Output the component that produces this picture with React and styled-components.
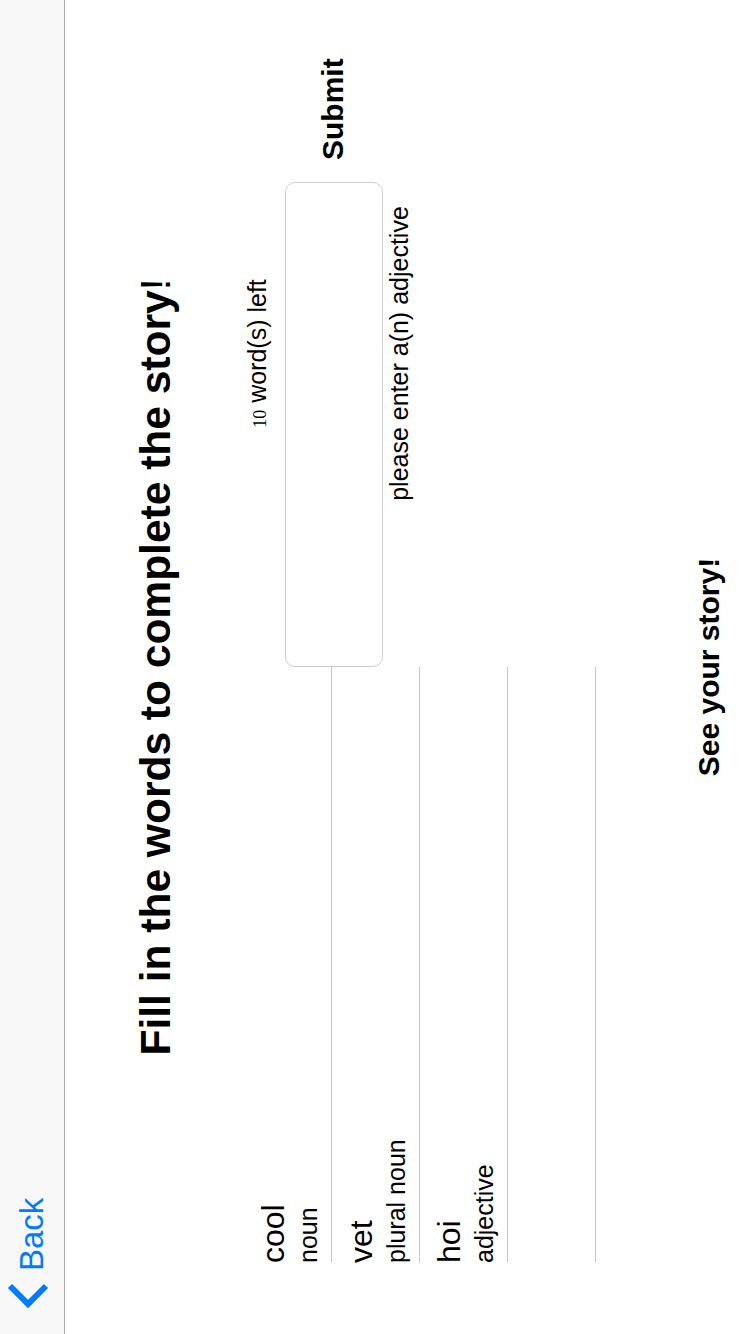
import React from "react";
import styled, { createGlobalStyle } from "styled-components";

const GlobalStyle = createGlobalStyle`
  html, body {
    margin: 0;
    padding: 0;
    overflow: hidden;
    background: #ffffff;
  }
  body {
    font-family: "Liberation Sans", Arial, sans-serif;
    color: #000;
  }
`;

const Viewport = styled.div`
  position: relative;
  width: 750px;
  height: 1334px;
  overflow: hidden;
  background: #fff;
`;

/* The app is shown in landscape; the screenshot is taken in portrait */
const Stage = styled.div`
  width: 1334px;
  height: 750px;
  transform-origin: 0 0;
  transform: translateY(1334px) rotate(-90deg);
  display: flex;
  flex-direction: column;
  background: #fff;
`;

const NavBar = styled.header`
  flex-shrink: 0;
  height: 64px;
  background: #f8f8f8;
  border-bottom: 1px solid #a9a9a9;
  display: flex;
  align-items: flex-start;
  padding-left: 24px;
`;

const BackButton = styled.button`
  display: flex;
  align-items: flex-start;
  background: none;
  border: 0;
  padding: 0;
  margin: 0;
  color: #007aff;
  font-family: inherit;
  font-size: 33px;
  line-height: 64px;
  cursor: pointer;
`;

const Chevron = styled.svg`
  margin-top: 6px;
  margin-right: 11px;
  flex-shrink: 0;
`;

const Title = styled.h1`
  margin: 0;
  flex-shrink: 0;
  height: 179px;
  box-sizing: border-box;
  padding-top: 66px;
  font-size: 42.5px;
  line-height: 50px;
  font-weight: 700;
  text-align: center;
`;

const Bang = styled.span`
  font-weight: 400;
`;

const Main = styled.main`
  display: flex;
  height: 450px;
  flex-shrink: 0;
`;

const Table = styled.ul`
  list-style: none;
  margin: 0;
  padding: 0;
  width: 667px;
  flex-shrink: 0;
`;

const Row = styled.li`
  margin-left: 71px;
  height: 88px;
  box-sizing: border-box;
  border-bottom: 1px solid #c8c7cc;
  padding-top: 13px;
`;

const Word = styled.div`
  font-size: 32px;
  line-height: 32px;
  height: 32px;
`;

const Kind = styled.div`
  margin-top: 7px;
  font-size: 25px;
  line-height: 24px;
`;

const Panel = styled.section`
  flex: 1;
  padding-right: 40px;
  display: flex;
  flex-direction: column;
`;

const Counter = styled.div`
  padding-top: 1px;
  font-size: 25px;
  line-height: 25px;
  text-align: center;
`;

const Count = styled.span`
  font-family: "Liberation Serif", "Times New Roman", serif;
  font-size: 18px;
`;

const InputRow = styled.div`
  display: flex;
  align-items: center;
  margin-top: 12px;
`;

const TextBox = styled.textarea`
  width: 485px;
  height: 98px;
  box-sizing: border-box;
  border: 1px solid #cfcfcf;
  border-radius: 10px;
  resize: none;
  outline: none;
  margin: 0;
  padding: 8px;
  font-family: inherit;
  font-size: 25px;
  background: #fff;
`;

const SubmitButton = styled.button`
  margin-left: 22px;
  margin-bottom: 2px;
  background: none;
  border: 0;
  padding: 0;
  font-family: inherit;
  font-size: 30px;
  line-height: 30px;
  font-weight: 700;
  color: #000;
  cursor: pointer;
`;

const Hint = styled.div`
  margin-top: 4px;
  font-size: 25px;
  line-height: 25px;
  text-align: center;
`;

const Footer = styled.button`
  align-self: center;
  background: none;
  border: 0;
  padding: 0;
  font-family: inherit;
  font-size: 30px;
  line-height: 30px;
  font-weight: 700;
  color: #000;
  cursor: pointer;
`;

const words = [
  { word: "cool", kind: "noun" },
  { word: "vet", kind: "plural noun" },
  { word: "hoi", kind: "adjective" },
  { word: "", kind: "" },
];

export default function App() {
  return (
    <>
      <GlobalStyle />
      <Viewport>
        <Stage>
          <NavBar>
            <BackButton>
              <Chevron width="28" height="44" viewBox="0 0 28 44">
                <path
                  d="M24 4 L6 22 L24 40"
                  fill="none"
                  stroke="#007aff"
                  strokeWidth="6"
                  strokeLinecap="butt"
                  strokeLinejoin="miter"
                />
              </Chevron>
              Back
            </BackButton>
          </NavBar>
          <Title>
            Fill in the words to complete the story<Bang>!</Bang>
          </Title>
          <Main>
            <Table>
              {words.map((w, i) => (
                <Row key={i}>
                  <Word>{w.word}</Word>
                  <Kind>{w.kind}</Kind>
                </Row>
              ))}
            </Table>
            <Panel>
              <Counter>
                <Count>10</Count> word(s) left
              </Counter>
              <InputRow>
                <TextBox />
                <SubmitButton>Submit</SubmitButton>
              </InputRow>
              <Hint>please enter a(n) adjective</Hint>
            </Panel>
          </Main>
          <Footer>See your story!</Footer>
        </Stage>
      </Viewport>
    </>
  );
}
